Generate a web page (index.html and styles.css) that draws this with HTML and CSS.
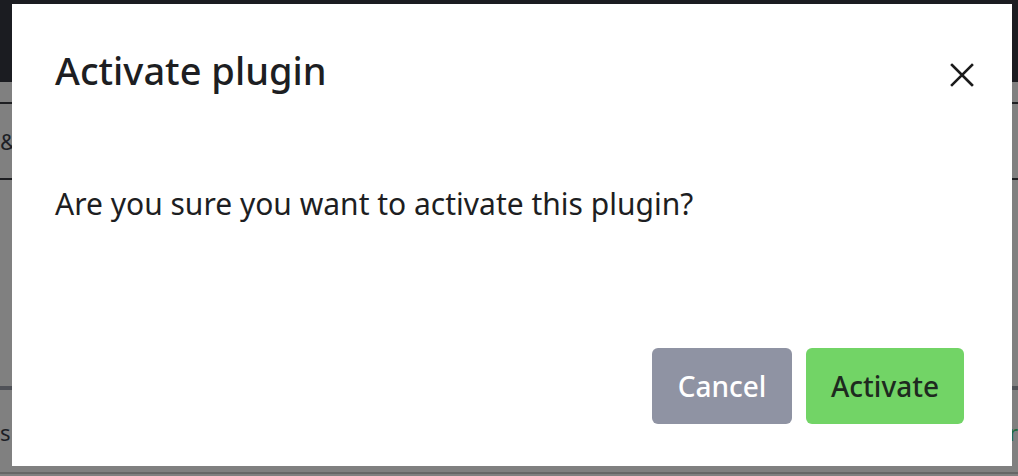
FILE: index.html
```html
<!DOCTYPE html>
<html>
<head>
<meta charset="utf-8">
<link rel="stylesheet" href="styles.css">
</head>
<body>
<div class="page">
  <div class="topbar"></div>
  <div class="row row-a"></div>
  <div class="row row-b"><span class="bg-text">&amp;</span></div>
  <div class="spacer"></div>
  <div class="row row-c">
    <span class="bg-text">s</span>
    <span class="bg-link">r</span>
  </div>
  <div class="row row-d"></div>
</div>

<div class="modal" role="dialog">
  <div class="modal-header">
    <h2 class="modal-title">Activate plugin</h2>
    <button class="close" aria-label="Close">
      <svg width="24" height="24" viewBox="0 0 24 24"><path d="M2 2L22 22M22 2L2 22" stroke="#1b1b1b" stroke-width="2.6" stroke-linecap="square" fill="none"/></svg>
    </button>
  </div>
  <div class="modal-body">
    <p>Are you sure you want to activate this plugin?</p>
  </div>
  <div class="modal-footer">
    <button class="btn btn-cancel">Cancel</button>
    <button class="btn btn-activate">Activate</button>
  </div>
</div>
</body>
</html>
```
FILE: styles.css
```css
* { box-sizing: border-box; }
html, body { margin: 0; padding: 0; }
body {
  width: 1018px;
  height: 476px;
  overflow: hidden;
  background: #808080;
  font-family: "Noto Sans", "Open Sans", sans-serif;
  position: relative;
}
.page {
  display: flex;
  flex-direction: column;
  height: 476px;
}
.topbar {
  height: 82px;
  background: #1b1c21;
  flex: none;
}
.row-a {
  height: 22px;
  border-bottom: 2px solid #1e1f22;
}
.row-b {
  height: 76px;
  border-bottom: 2px solid #1e1f22;
  display: flex;
  align-items: center;
}
.bg-text {
  font-size: 22px;
  color: #1d1f26;
}
.spacer { flex: 1; }
.row-c {
  border-top: 4px solid #505258;
  height: 86px;
  display: flex;
  align-items: center;
  justify-content: space-between;
  padding-top: 2px;
}
.bg-link {
  font-size: 22px;
  color: #1d6a3c;
}
.row-d {
  height: 0;
  border-top: 2px solid #666;
  margin-bottom: 2px;
}

.modal {
  position: absolute;
  left: 12px;
  top: 4px;
  width: 1000px;
  height: 462px;
  background: #fff;
  display: flex;
  flex-direction: column;
  padding: 0 48px 42px 43px;
}
.modal-header {
  display: flex;
  align-items: flex-start;
  justify-content: space-between;
  padding-top: 44px;
}
.modal-title {
  margin: 0;
  font-size: 38px;
  line-height: 44px;
  font-weight: 500;
  color: #1d1e22;
}
.close {
  border: 0;
  background: none;
  padding: 0;
  margin-top: 15px;
  margin-right: -10px;
  width: 24px;
  height: 24px;
  display: flex;
}
.modal-body p {
  margin: 0;
  padding-top: 92px;
  font-size: 30px;
  line-height: 40px;
  color: #1d1e22;
}
.modal-footer {
  margin-top: auto;
  display: flex;
  justify-content: flex-end;
  gap: 14px;
}
.btn {
  height: 76px;
  border: 0;
  border-radius: 6px;
  font-family: inherit;
  font-size: 28px;
  font-weight: 500;
  padding: 0;
}
.btn-cancel {
  width: 140px;
  background: #8f93a3;
  color: #fff;
}
.btn-activate {
  width: 158px;
  background: #72d466;
  color: #1e2a1f;
}
```
